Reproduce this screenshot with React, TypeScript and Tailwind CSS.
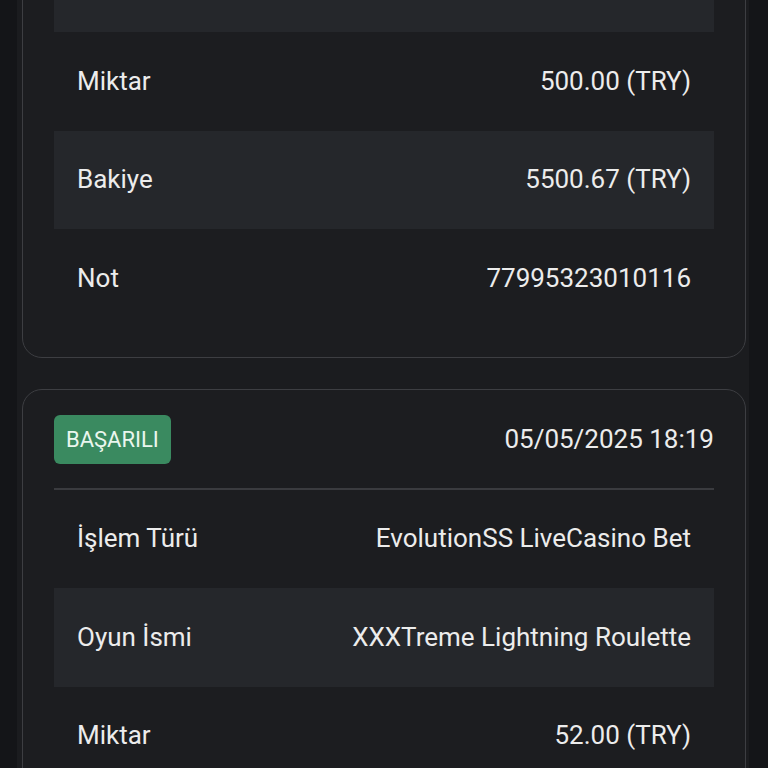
import React from "react";

type Row = { label: string; value: string };

function DataRow({ row, striped }: { row: Row; striped: boolean }) {
  return (
    <div
      className={`flex h-[98.5px] items-center justify-between px-[23px] ${striped ? "bg-[#25272b]" : ""}`}
    >
      <span>{row.label}</span>
      <span>{row.value}</span>
    </div>
  );
}

export default function App() {
  const card1: Row[] = [
    { label: "", value: "" },
    { label: "Miktar", value: "500.00 (TRY)" },
    { label: "Bakiye", value: "5500.67 (TRY)" },
    { label: "Not", value: "77995323010116" },
  ];
  const card2: Row[] = [
    { label: "İşlem Türü", value: "EvolutionSS LiveCasino Bet" },
    { label: "Oyun İsmi", value: "XXXTreme Lightning Roulette" },
    { label: "Miktar", value: "52.00 (TRY)" },
  ];
  return (
    <div
      className="h-[768px] w-[768px] overflow-hidden bg-[#141518] text-[26px] text-[#ececec]"
      style={{ fontFamily: "Roboto, 'Noto Sans', sans-serif" }}
    >
      <div className="ml-[17px] flex h-full w-[732px] flex-col overflow-hidden bg-[#1b1c1f]">
        <div className="ml-[5px] mr-[3px] -mt-[67.5px] flex flex-col gap-[31px]">
          <div className="rounded-[20px] border border-[#3d3e42] bg-[#1c1d20] px-[31px] pb-[29px]">
            {card1.map((r, i) => (
              <DataRow key={i} row={r} striped={i % 2 === 0} />
            ))}
          </div>
          <div className="rounded-[20px] border border-[#3d3e42] bg-[#1c1d20] px-[31px] pt-[25px] pb-[30px]">
            <div className="flex items-center justify-between border-b-2 border-[#3a3b3f] pb-[24px]">
              <span className="flex h-[49px] items-center rounded-[6px] bg-[#3a8a60] px-[12px] text-[22px] text-[#eaf6ee]">
                BAŞARILI
              </span>
              <span>05/05/2025 18:19</span>
            </div>
            {card2.map((r, i) => (
              <DataRow key={i} row={r} striped={i % 2 === 1} />
            ))}
          </div>
        </div>
      </div>
    </div>
  );
}
